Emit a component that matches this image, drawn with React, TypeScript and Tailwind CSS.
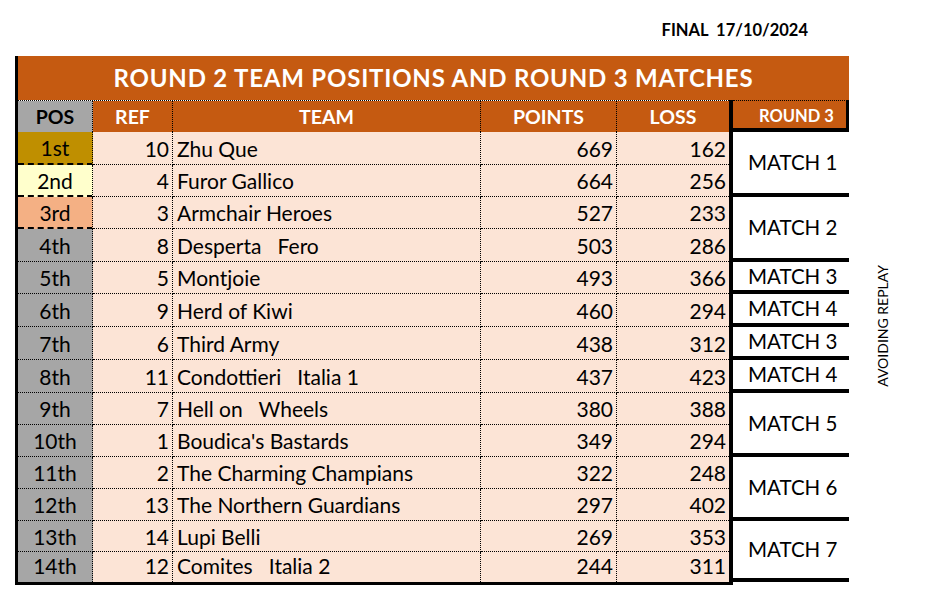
import React from "react";

type Row = {
  pos: string;
  ref: number;
  team: string;
  pts: number;
  loss: number;
  posBg: string;
  h: string;
  dash: boolean;
};

const rows: Row[] = [
  { pos: "1st", ref: 10, team: "Zhu Que", pts: 669, loss: 162, posBg: "bg-[#bf8f00]", h: "h-[33px]", dash: true },
  { pos: "2nd", ref: 4, team: "Furor Gallico", pts: 664, loss: 256, posBg: "bg-[#ffffcc]", h: "h-[32px]", dash: true },
  { pos: "3rd", ref: 3, team: "Armchair Heroes", pts: 527, loss: 233, posBg: "bg-[#f4b084]", h: "h-[32px]", dash: true },
  { pos: "4th", ref: 8, team: "Desperta   Fero", pts: 503, loss: 286, posBg: "bg-[#a6a6a6]", h: "h-[33px]", dash: false },
  { pos: "5th", ref: 5, team: "Montjoie", pts: 493, loss: 366, posBg: "bg-[#a6a6a6]", h: "h-[32px]", dash: false },
  { pos: "6th", ref: 9, team: "Herd of Kiwi", pts: 460, loss: 294, posBg: "bg-[#a6a6a6]", h: "h-[33px]", dash: false },
  { pos: "7th", ref: 6, team: "Third Army", pts: 438, loss: 312, posBg: "bg-[#a6a6a6]", h: "h-[33px]", dash: false },
  { pos: "8th", ref: 11, team: "Condottieri   Italia 1", pts: 437, loss: 423, posBg: "bg-[#a6a6a6]", h: "h-[33px]", dash: false },
  { pos: "9th", ref: 7, team: "Hell on   Wheels", pts: 380, loss: 388, posBg: "bg-[#a6a6a6]", h: "h-[32px]", dash: false },
  { pos: "10th", ref: 1, team: "Boudica's Bastards", pts: 349, loss: 294, posBg: "bg-[#a6a6a6]", h: "h-[32px]", dash: false },
  { pos: "11th", ref: 2, team: "The Charming Champians", pts: 322, loss: 248, posBg: "bg-[#a6a6a6]", h: "h-[32px]", dash: false },
  { pos: "12th", ref: 13, team: "The Northern Guardians", pts: 297, loss: 402, posBg: "bg-[#a6a6a6]", h: "h-[32px]", dash: false },
  { pos: "13th", ref: 14, team: "Lupi Belli", pts: 269, loss: 353, posBg: "bg-[#a6a6a6]", h: "h-[31px]", dash: false },
  { pos: "14th", ref: 12, team: "Comites   Italia 2", pts: 244, loss: 311, posBg: "bg-[#a6a6a6]", h: "h-[30px]", dash: false },
];

const matches: { label: string; h: string }[] = [
  { label: "MATCH 1", h: "h-[65px]" },
  { label: "MATCH 2", h: "h-[65px]" },
  { label: "MATCH 3", h: "h-[32px]" },
  { label: "MATCH 4", h: "h-[33px]" },
  { label: "MATCH 3", h: "h-[33px]" },
  { label: "MATCH 4", h: "h-[33px]" },
  { label: "MATCH 5", h: "h-[64px]" },
  { label: "MATCH 6", h: "h-[64px]" },
  { label: "MATCH 7", h: "h-[61px]" },
];

export default function App() {
  return (
    <div className="w-[925px] h-[593px] bg-white text-black font-['Lato','Liberation_Sans',sans-serif] overflow-hidden">
      <div className="h-[56px] flex justify-end items-start pt-[20px] pr-[117px]">
        <span className="text-[16.5px] leading-[20px] font-bold whitespace-pre">FINAL  17/10/2024</span>
      </div>
      <div className="flex items-start">
        <div className="ml-[15px] w-[834px] border-l-[3px] border-black">
          <div className="h-[44px] bg-[#c55a11] flex items-center justify-center text-white font-bold text-[24px] tracking-[0.8px] leading-none">
            ROUND 2 TEAM POSITIONS AND ROUND 3 MATCHES
          </div>
          <div className="flex">
            <div className="w-[711px] border-b-[3px] border-black">
              <div className="flex h-[32px] border-t border-dotted border-black text-[19.5px] font-bold leading-none">
                <div className="w-[75px] bg-[#a6a6a6] border-r border-dotted border-black flex items-center justify-center">POS</div>
                <div className="w-[80px] bg-[#c55a11] text-white border-r border-dotted border-black flex items-center justify-center">REF</div>
                <div className="w-[308px] bg-[#c55a11] text-white border-r border-dotted border-black flex items-center justify-center">TEAM</div>
                <div className="w-[136px] bg-[#c55a11] text-white border-r border-dotted border-black flex items-center justify-center">POINTS</div>
                <div className="w-[112px] bg-[#c55a11] text-white flex items-center justify-center">LOSS</div>
              </div>
              {rows.map((r, i) => {
                const last = i === rows.length - 1;
                const hb = last ? "pb-[3px]" : "border-b border-dotted border-black";
                return (
                  <div key={i} className={`flex ${r.h} text-[21px] leading-none bg-[#fce4d6]`}>
                    <div
                      className={`w-[75px] ${r.posBg} flex items-center justify-center ${
                        r.dash
                          ? "border-r border-b-2 border-black [border-right-style:dotted] [border-bottom-style:dashed]"
                          : `border-r border-dotted border-black ${hb}`
                      }`}
                    >
                      {r.pos}
                    </div>
                    <div className={`w-[80px] border-r border-dotted border-black flex items-center justify-end pr-[3px] ${hb}`}>{r.ref}</div>
                    <div className={`w-[308px] border-r border-dotted border-black flex items-center pl-[4px] whitespace-pre ${hb}`}>{r.team}</div>
                    <div className={`w-[136px] border-r border-dotted border-black flex items-center justify-end pr-[3px] ${hb}`}>{r.pts}</div>
                    <div className={`w-[112px] flex items-center justify-end pr-[3px] ${hb}`}>{r.loss}</div>
                  </div>
                );
              })}
            </div>
            <div className="w-[120px] border-l-4 border-black">
              <div className="h-[32px] bg-[#c55a11] text-white font-bold text-[16.5px] leading-none flex items-center justify-center border-t border-r-[3px] border-b-4 border-black [border-top-style:dotted] pl-[14px] pt-[3px]">
                ROUND 3
              </div>
              {matches.map((m, i) => (
                <div key={i} className={`${m.h} bg-white border-b-4 border-black flex items-center pl-[15px] text-[20.5px] leading-none`}>
                  {m.label}
                </div>
              ))}
            </div>
          </div>
        </div>
        <div className="ml-[26px] mt-[209px] [writing-mode:vertical-rl] rotate-180 text-[14px] leading-[16px] whitespace-nowrap">
          AVOIDING REPLAY
        </div>
      </div>
    </div>
  );
}
